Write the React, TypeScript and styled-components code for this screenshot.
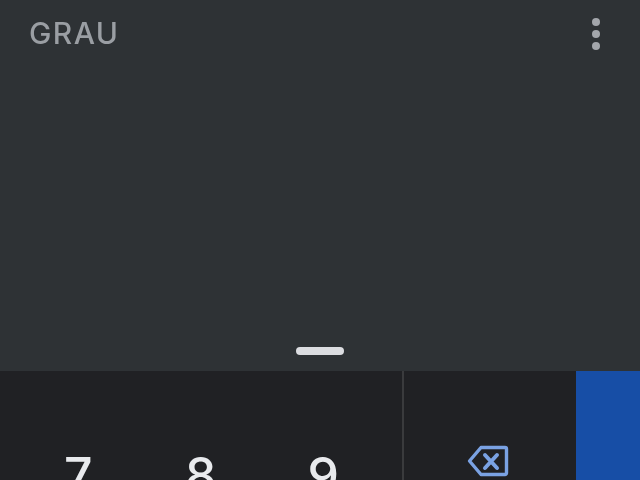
import React from "react";
import styled, { createGlobalStyle } from "styled-components";

const Global = createGlobalStyle`
  html, body { margin: 0; padding: 0; background: #2e3235; overflow: hidden; }
  #root { width: 640px; height: 480px; }
`;
const Screen = styled.div`
  width: 640px; height: 480px; display: flex; flex-direction: column; overflow: hidden;
  font-family: Inter, "Open Sans", sans-serif;
`;
const Display = styled.header`
  height: 371px; flex: none; background: #2e3235; display: flex; flex-direction: column;
  box-sizing: border-box; padding: 0 0 16px;
`;
const TopBar = styled.div`
  display: flex; justify-content: space-between; align-items: center;
  padding: 14px 40px 0 29px; height: 38px;
`;
const Mode = styled.span`
  font-family: Inter, Lato, sans-serif; font-size: 30px; font-weight: 500; line-height: 38px; letter-spacing: 1.4px; color: #9a9ea3;
  filter: blur(0.5px);
`;
const MenuDots = styled.div`
  display: flex; flex-direction: column; gap: 4px; margin-top: 2px; filter: blur(0.4px);
`;
const Dot = styled.i`
  display: block; width: 8px; height: 8px; border-radius: 50%; background: #a3a6ab;
`;
const Spacer = styled.div`flex: 1;`;
const Handle = styled.div`
  align-self: center; width: 48px; height: 8px; border-radius: 4px; background: #dcdde1;
`;
const Keypad = styled.main`
  flex: 1; display: flex; background: #202124; min-height: 0;
`;
const Digits = styled.section`
  width: 402px; flex: none; box-sizing: border-box; padding: 78px 18px 0 17px;
  display: grid; grid-template-columns: repeat(3, 122.5px); align-content: start;
  justify-items: center;
`;
const Digit = styled.span`
  font-family: Inter, sans-serif; font-size: 50px; font-weight: 500; line-height: 52px; color: #e8eaed;
  filter: blur(0.5px);
`;
const Ops = styled.section`
  width: 174px; flex: none; box-sizing: border-box; border-left: 2px solid #3a3b3d;
  display: flex; justify-content: center; padding: 73px 5px 0 0;
`;
const Back = styled.svg`
  width: 42px; height: 33px; display: block; margin-top: 1px; flex: none; filter: blur(0.4px);
`;
const Side = styled.aside`
  flex: 1; background: #174ea6;
`;

export default function App() {
  return (
    <Screen>
      <Global />
      <Display>
        <TopBar>
          <Mode>GRAU</Mode>
          <MenuDots><Dot /><Dot /><Dot /></MenuDots>
        </TopBar>
        <Spacer />
        <Handle />
      </Display>
      <Keypad>
        <Digits>
          <Digit>7</Digit><Digit>8</Digit><Digit>9</Digit>
        </Digits>
        <Ops>
          <Back viewBox="0 0 42 33" fill="none" stroke="#7aa2e3" strokeWidth="3.4" strokeLinejoin="round" strokeLinecap="round">
            <path d="M14 2.5H38a1.5 1.5 0 0 1 1.5 1.5V28a1.5 1.5 0 0 1-1.5 1.5H14L2.5 16Z" />
            <path d="M18 10l12 13M30 10l-12 13" strokeWidth="4" />
          </Back>
        </Ops>
        <Side />
      </Keypad>
    </Screen>
  );
}
